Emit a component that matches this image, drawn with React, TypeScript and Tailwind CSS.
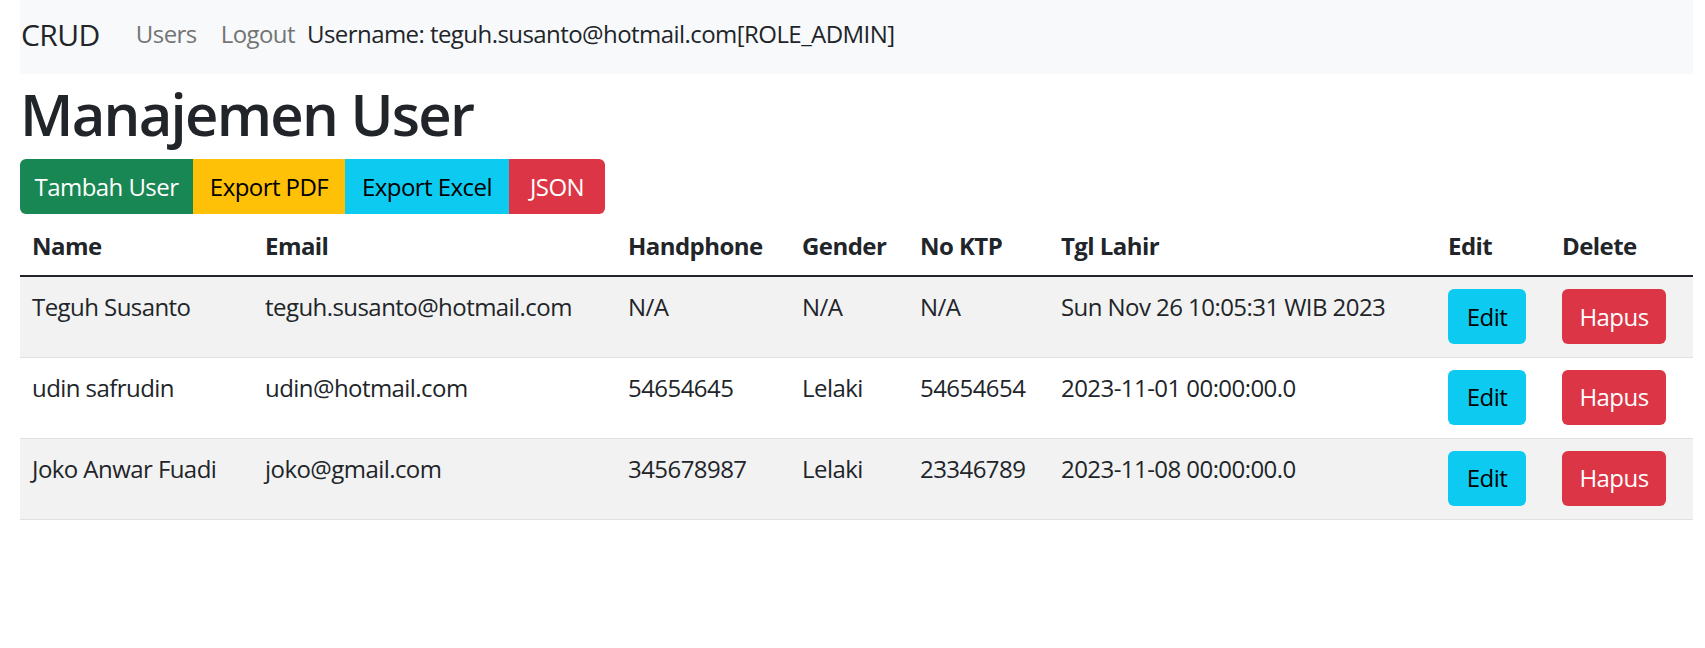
const users = [
  {
    name: 'Teguh Susanto',
    email: 'teguh.susanto@hotmail.com',
    phone: 'N/A',
    gender: 'N/A',
    ktp: 'N/A',
    birth: 'Sun Nov 26 10:05:31 WIB 2023',
  },
  {
    name: 'udin safrudin',
    email: 'udin@hotmail.com',
    phone: '54654645',
    gender: 'Lelaki',
    ktp: '54654654',
    birth: '2023-11-01 00:00:00.0',
  },
  {
    name: 'Joko Anwar Fuadi',
    email: 'joko@gmail.com',
    phone: '345678987',
    gender: 'Lelaki',
    ktp: '23346789',
    birth: '2023-11-08 00:00:00.0',
  },
];

const headers = ['Name', 'Email', 'Handphone', 'Gender', 'No KTP', 'Tgl Lahir', 'Edit', 'Delete'];

const App = () => {
  return (
    <div
      className="min-h-[648px] w-full bg-white text-[#212529] tracking-[-0.035em]"
      style={{ fontFamily: '"Open Sans", "Noto Sans", sans-serif' }}
    >
      {/* navbar */}
      <nav className="ml-[20px] mr-[12px] flex h-[74px] items-center bg-[#f8f9fa] pb-[6px]">
        <a className="mr-[24px] pl-[1px] text-[30px] leading-[45px] text-[#212529]">CRUD</a>
        <a className="px-[12px] text-[24px] leading-[36px] text-[#737475]">Users</a>
        <a className="px-[12px] text-[24px] leading-[36px] text-[#737475]">Logout</a>
        <span className="text-[24px] leading-[36px]">Username: teguh.susanto@hotmail.com[ROLE_ADMIN]</span>
      </nav>

      <div className="ml-[20px] mr-[12px]">
        <h1 className="mt-[5px] mb-[10px] text-[58px] font-semibold leading-[70px] tracking-[-0.03em]">
          Manajemen User
        </h1>

        <div className="flex">
          <button className="h-[55px] w-[173px] rounded-l-[6px] bg-[#198754] text-[24px] text-white">
            Tambah User
          </button>
          <button className="h-[55px] w-[152px] bg-[#ffc107] text-[24px] text-black">Export PDF</button>
          <button className="h-[55px] w-[164px] bg-[#0dcaf0] text-[24px] text-black">Export Excel</button>
          <button className="h-[55px] w-[96px] rounded-r-[6px] bg-[#dc3545] text-[24px] text-white">JSON</button>
        </div>

        <table className="w-full table-fixed border-collapse text-[24px] leading-[36px]">
          <colgroup>
            <col className="w-[233px]" />
            <col className="w-[363px]" />
            <col className="w-[174px]" />
            <col className="w-[118px]" />
            <col className="w-[141px]" />
            <col className="w-[387px]" />
            <col className="w-[114px]" />
            <col className="w-[143px]" />
          </colgroup>
          <thead>
            <tr className="h-[61px] border-b-2 border-[#212529]">
              {headers.map((h) => (
                <th key={h} className="px-[12px] pt-[14px] pb-[11px] text-left align-top font-bold">
                  {h}
                </th>
              ))}
            </tr>
          </thead>
          <tbody>
            {users.map((u, i) => (
              <tr
                key={u.name}
                className={`h-[81px] border-b border-[#dee2e6] ${i % 2 === 0 ? 'bg-[#f2f2f2]' : 'bg-white'}`}
              >
                <td className="px-[12px] pt-[12px] align-top">{u.name}</td>
                <td className="px-[12px] pt-[12px] align-top">{u.email}</td>
                <td className="px-[12px] pt-[12px] align-top">{u.phone}</td>
                <td className="px-[12px] pt-[12px] align-top">{u.gender}</td>
                <td className="px-[12px] pt-[12px] align-top">{u.ktp}</td>
                <td className="px-[12px] pt-[12px] align-top">{u.birth}</td>
                <td className="px-[12px] pt-[12px] align-top">
                  <button className="h-[55px] w-[78px] rounded-[6px] bg-[#0dcaf0] text-[24px] text-black">Edit</button>
                </td>
                <td className="px-[12px] pt-[12px] align-top">
                  <button className="h-[55px] w-[104px] rounded-[6px] bg-[#dc3545] text-[24px] text-white">
                    Hapus
                  </button>
                </td>
              </tr>
            ))}
          </tbody>
        </table>
      </div>
    </div>
  );
};

export default App;
